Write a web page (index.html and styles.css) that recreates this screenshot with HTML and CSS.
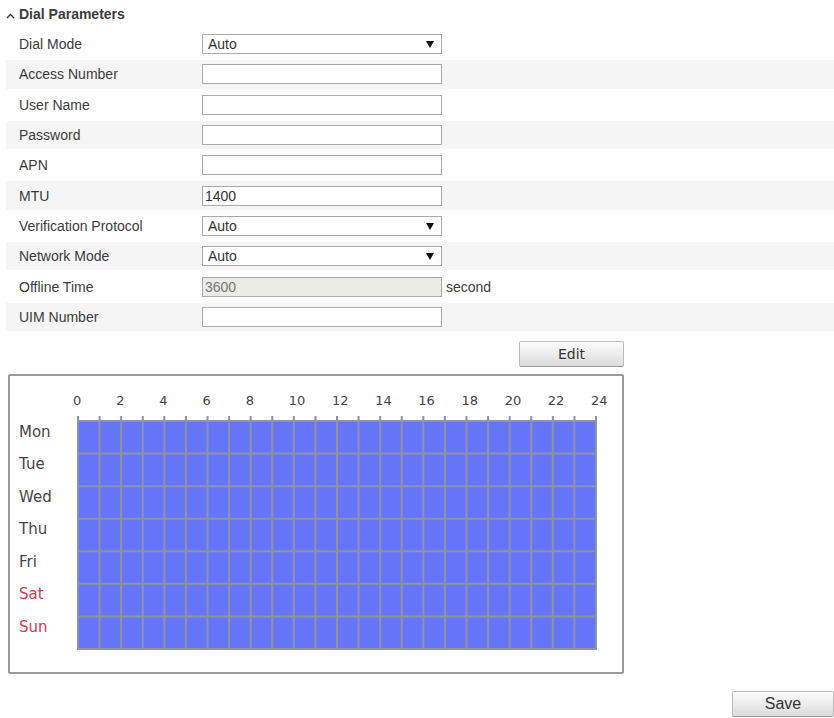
FILE: index.html
```html
<!DOCTYPE html>
<html lang="en">
<head>
<meta charset="utf-8">
<title>Dial Parameters</title>
<link rel="stylesheet" href="styles.css">
</head>
<body>
<form class="page">
  <h1 class="title">
    <svg class="chevron" viewBox="0 0 8 6" aria-hidden="true"><path d="M0.5 5 L4 1.5 L7.5 5"/></svg>
    Dial Parameters
  </h1>
  <div class="fields">
    <div class="row"><label for="mode">Dial Mode</label><span class="select"><select id="mode" class="control"><option>Auto</option></select><svg class="arrow" viewBox="0 0 8 7" aria-hidden="true"><path d="M0 0H8L4 7Z"/></svg></span></div>
    <div class="row"><label for="access">Access Number</label><input id="access" class="control" type="text"></div>
    <div class="row"><label for="user">User Name</label><input id="user" class="control" type="text"></div>
    <div class="row"><label for="pass">Password</label><input id="pass" class="control" type="password"></div>
    <div class="row"><label for="apn">APN</label><input id="apn" class="control" type="text"></div>
    <div class="row"><label for="mtu">MTU</label><input id="mtu" class="control" type="text" value="1400"></div>
    <div class="row"><label for="verify">Verification Protocol</label><span class="select"><select id="verify" class="control"><option>Auto</option></select><svg class="arrow" viewBox="0 0 8 7" aria-hidden="true"><path d="M0 0H8L4 7Z"/></svg></span></div>
    <div class="row"><label for="network">Network Mode</label><span class="select"><select id="network" class="control"><option>Auto</option></select><svg class="arrow" viewBox="0 0 8 7" aria-hidden="true"><path d="M0 0H8L4 7Z"/></svg></span></div>
    <div class="row"><label for="offline">Offline Time</label><input id="offline" class="control" type="text" value="3600" disabled><span class="unit">second</span></div>
    <div class="row"><label for="uim">UIM Number</label><input id="uim" class="control" type="text"></div>
  </div>
  <div class="schedule">
    <button class="button edit" type="button">Edit</button>
    <div class="chart">
      <div class="hours"><span>0</span><span>2</span><span>4</span><span>6</span><span>8</span><span>10</span><span>12</span><span>14</span><span>16</span><span>18</span><span>20</span><span>22</span><span>24</span></div>
      <div class="days"><span>Mon</span><span>Tue</span><span>Wed</span><span>Thu</span><span>Fri</span><span class="weekend">Sat</span><span class="weekend">Sun</span></div>
      <svg class="plot" viewBox="0 0 240 70" preserveAspectRatio="none" role="img" aria-label="Active all day, every day">
        <rect class="active" width="240" height="70"/>
        <path class="lines" d="M10-1.5V70M20-1.5V70M30-1.5V70M40-1.5V70M50-1.5V70M60-1.5V70M70-1.5V70M80-1.5V70M90-1.5V70M100-1.5V70M110-1.5V70M120-1.5V70M130-1.5V70M140-1.5V70M150-1.5V70M160-1.5V70M170-1.5V70M180-1.5V70M190-1.5V70M200-1.5V70M210-1.5V70M220-1.5V70M230-1.5V70M0 10H240M0 20H240M0 30H240M0 40H240M0 50H240M0 60H240"/>
        <path class="lines" d="M0-1.5V70H240V-1.5M0 0H240"/>
      </svg>
    </div>
  </div>
  <button class="button save" type="submit">Save</button>
</form>
</body>
</html>
```
FILE: styles.css
```css
* {
  box-sizing: border-box;
}

body {
  margin: 0;
  background: #fff;
  color: #3c3c3c;
  font: 14px/20px "Liberation Sans", Arial, sans-serif;
}

.page {
  display: flex;
  flex-direction: column;
  padding: 4px 0 0 6px;
}

.title {
  display: flex;
  align-items: center;
  gap: 4px;
  margin: 0 0 5px;
  font-size: 14px;
}

.chevron {
  width: 9px;
  height: 6px;
  margin-top: 4px;
  fill: none;
  stroke: #333;
  stroke-width: 1.3;
}

.fields {
  display: grid;
  grid-auto-rows: 1fr;
  min-height: 303px;
}

.row {
  display: grid;
  grid-template-columns: 183px 240px 1fr;
  align-items: center;
  padding-left: 13px;
}

.row:nth-child(even) {
  background: #f5f5f5;
  border-bottom: 1px solid #fff;
  border-top: 1px solid #fff;
}

.unit {
  padding-left: 4px;
}

.select {
  position: relative;
  display: flex;
}

.control {
  width: 100%;
  height: 20px;
  padding: 0 2px;
  border: 1px solid #aaa;
  border-radius: 0;
  background: #fff;
  color: #333;
  font: inherit;
  line-height: 18px;
  appearance: none;
}

select.control {
  padding-left: 5px;
}

.control:disabled {
  background: #ebebe6;
  color: #777;
}

.arrow {
  position: absolute;
  top: 7px;
  right: 8px;
  width: 8px;
  height: 7px;
  fill: #111;
  pointer-events: none;
}

.schedule {
  display: flex;
  flex-direction: column;
  align-items: flex-end;
  gap: 7px;
  width: 100%;
  max-width: 618px;
  padding: 9px 0 0 2px;
}

.button {
  width: 105px;
  height: 26px;
  padding: 0;
  border: 1px solid #bbb;
  border-bottom-color: #999;
  border-radius: 2px;
  background: linear-gradient(#fcfcfc, #dcdcdc);
  color: #333;
  font: 16px/24px "Liberation Sans", Arial, sans-serif;
}

.edit {
  font: 14px/24px "DejaVu Sans", Verdana, sans-serif;
}

.save {
  align-self: flex-end;
  width: 102px;
  margin-top: 17px;
}

.chart {
  display: grid;
  grid-template-columns: 59px 1fr;
  width: 100%;
  padding: 15px 26px 23px 9px;
  border: 2px solid #999;
  border-radius: 2px;
  font: 15px/20px "DejaVu Sans", Verdana, sans-serif;
  color: #444;
}

.hours {
  grid-column: 2;
  display: grid;
  grid-template-columns: repeat(12, 1fr) 0;
  margin: 0 0 10px -5px;
  padding-right: 5px;
  font-size: 13px;
}

.days {
  display: grid;
  grid-auto-rows: 1fr;
  align-items: start;
  min-height: 228px;
  padding-top: 1px;
}

.weekend {
  color: #d8394b;
}

.plot {
  width: 100%;
  height: 100%;
  overflow: visible;
}

.active {
  fill: #6574f8;
}

.lines {
  fill: none;
  stroke: #8f93a0;
  stroke-width: 2px;
  vector-effect: non-scaling-stroke;
}
```
